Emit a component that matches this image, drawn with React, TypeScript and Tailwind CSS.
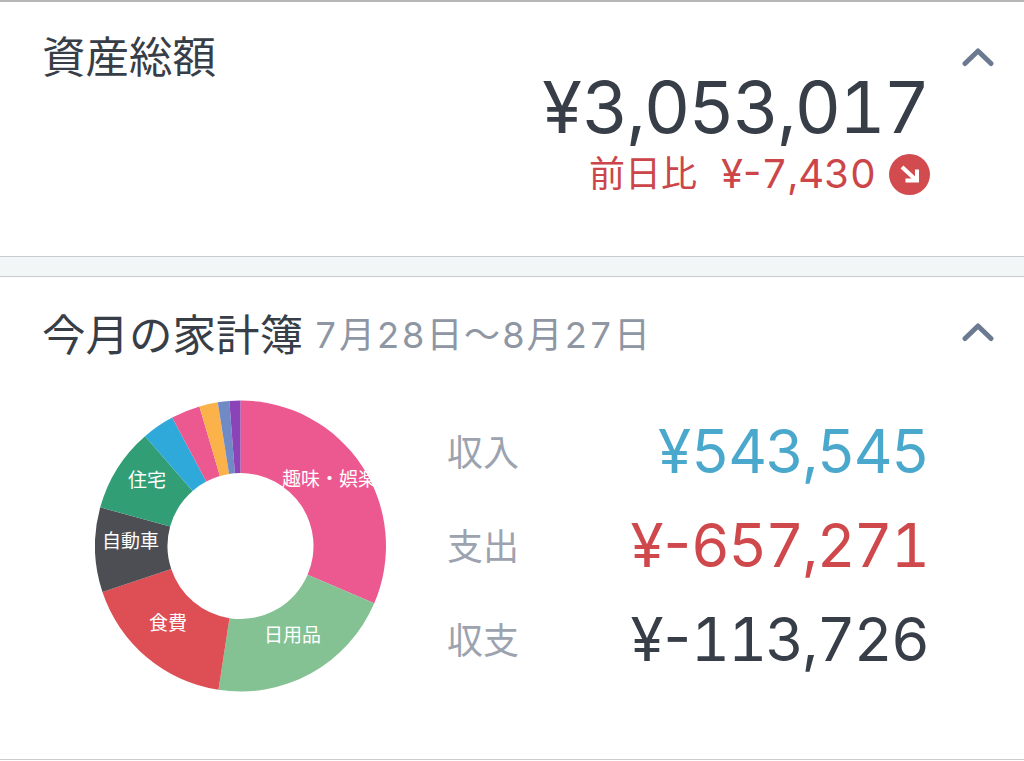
const FONT = "font-['Inter','Noto_Sans_CJK_JP',sans-serif]";

const CX = 145.5;
const CY = 146;
const R = 145.5;
const r = 73;

const slices = [
  { from: 0, to: 113.2, color: "#ec5990" },
  { from: 113.2, to: 188.7, color: "#84c293" },
  { from: 188.7, to: 251.6, color: "#de4e55" },
  { from: 251.6, to: 285.4, color: "#4d4e53" },
  { from: 285.4, to: 319, color: "#319e76" },
  { from: 319, to: 332, color: "#2fa9da" },
  { from: 332, to: 343.6, color: "#ec5990" },
  { from: 343.6, to: 351, color: "#fbb24a" },
  { from: 351, to: 355.6, color: "#6f8ac5" },
  { from: 355.6, to: 360, color: "#8a44b8" },
];

function pt(radius: number, deg: number) {
  const a = (deg * Math.PI) / 180;
  return `${(CX + radius * Math.sin(a)).toFixed(2)} ${(CY - radius * Math.cos(a)).toFixed(2)}`;
}

function arc(from: number, to: number) {
  const large = to - from > 180 ? 1 : 0;
  return `M${pt(R, from)} A${R} ${R} 0 ${large} 1 ${pt(R, to)} L${pt(r, to)} A${r} ${r} 0 ${large} 0 ${pt(r, from)} Z`;
}

const labels = [
  { t: "趣味・娯楽", x: 187, y: 86 },
  { t: "日用品", x: 169, y: 242 },
  { t: "食費", x: 54, y: 230 },
  { t: "自動車", x: 7, y: 148 },
  { t: "住宅", x: 33, y: 87 },
];

function Chevron() {
  return (
    <svg width="32" height="21" viewBox="0 0 32 21" fill="none" className="block">
      <path d="M3 17.5 L16 5 L29 17.5" stroke="#6b7a90" strokeWidth="5" strokeLinecap="round" strokeLinejoin="round" />
    </svg>
  );
}

function Money({ prefix, digits }: { prefix: string; digits: string }) {
  return (
    <>
      <span>{prefix}</span>
      <span className="tabular-nums tracking-[-0.03em]">{digits}</span>
    </>
  );
}

function Donut() {
  return (
    <svg width="291" height="292" viewBox="0 0 291 292" className="block shrink-0">
      <defs>
        <clipPath id="labelClip">
          <rect x="0" y="0" width="278" height="292" />
        </clipPath>
      </defs>
      {slices.map((s, i) => (
        <path key={i} d={arc(s.from, s.to)} fill={s.color} />
      ))}
      <g clipPath="url(#labelClip)" fill="#ffffff" fontSize="19" fontFamily="'Noto Sans CJK JP',sans-serif">
        {labels.map((l) => (
          <text key={l.t} x={l.x} y={l.y}>
            {l.t}
          </text>
        ))}
      </g>
    </svg>
  );
}

function Row({ label, prefix, digits, color }: { label: string; prefix: string; digits: string; color: string }) {
  return (
    <div className="flex h-[94px] items-center justify-between">
      <span className="pt-[4px] text-[36px] leading-none text-[#9ca3af]">{label}</span>
      <span className={`text-[60px] leading-none ${color}`}>
        <Money prefix={prefix} digits={digits} />
      </span>
    </div>
  );
}

export default function App() {
  return (
    <div className={`h-[761px] w-[1024px] overflow-hidden bg-white ${FONT}`}>
      <section className="flex h-[257px] border-t-2 border-b border-t-[#b4b6b8] border-b-[#c9cccf] pl-[42px] pr-[30px]">
        <h2 className="flex-1 pt-[28px] text-[43.5px] leading-[54px] font-normal text-[#383e47]">資産総額</h2>
        <div className="mr-[34px] flex flex-col items-end pt-[66px]">
          <div className="text-[72px] leading-[78px] text-[#383e47]">
            <Money prefix="¥" digits="3,053,017" />
          </div>
          <div className="mr-[-2px] mt-[6px] flex items-center text-[#cc4649]">
            <span className="text-[36px] leading-[44px]">前日比</span>
            <span className="ml-[24px] text-[40px] leading-[44px]">
              <span>¥-</span>
              <span className="tabular-nums">7,430</span>
            </span>
            <span className="ml-[13px] flex h-[41px] w-[41px] items-center justify-center rounded-full bg-[#d24b4e]">
              <svg width="26" height="26" viewBox="0 0 26 26" fill="none">
                <path d="M5 6 L19 19 M8.5 19.5 H20 V8.5" stroke="#ffffff" strokeWidth="4" />
              </svg>
            </span>
          </div>
        </div>
        <div className="pt-[44px]">
          <Chevron />
        </div>
      </section>
      <div className="h-[19px] bg-[#f3f6f6]" />
      <section className="h-[484px] border-t border-b border-t-[#c9cccf] border-b-[#c9cccf] pl-[42px] pr-[30px]">
        <div className="flex h-[123px] items-start pt-[31px]">
          <h2 className="text-[43.5px] leading-[54px] font-normal text-[#383e47]">今月の家計簿</h2>
          <span className="ml-[11px] flex-1 pt-[3px] text-[36px] leading-[48px] tabular-nums tracking-[1.6px] text-[#8e96a3]">7月28日〜8月27日</span>
          <div className="pt-[13px]">
            <Chevron />
          </div>
        </div>
        <div className="flex items-start pl-[53px]">
          <Donut />
          <div className="ml-[61px] mr-[66px] flex-1 pt-[4px]">
            <Row label="収入" prefix="¥" digits="543,545" color="text-[#4aa8cc]" />
            <Row label="支出" prefix="¥-" digits="657,271" color="text-[#cf484c]" />
            <Row label="収支" prefix="¥-" digits="113,726" color="text-[#383e47]" />
          </div>
        </div>
      </section>
    </div>
  );
}
